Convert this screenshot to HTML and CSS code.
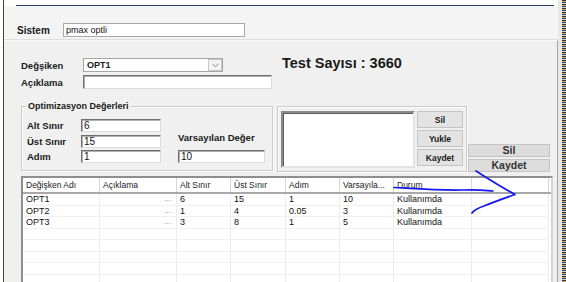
FILE: index.html
```html
<!DOCTYPE html>
<html lang="tr">
<head>
    <meta charset="UTF-8">
    <title>Optimizasyon</title>
    <link rel="stylesheet" href="styles.css">
</head>
<body>

<div class="screen">
    <div class="edge-left"></div>

    <div class="app">
        <div class="titlebar"><div class="titlebar-rule"></div></div>

        <div class="sistem-bar">
            <span class="lbl sistem-lbl">Sistem</span>
            <input class="field flat sistem-field" type="text" value="pmax optli">
        </div>

        <div class="main">
            <div class="top-row">
                <div class="form-col">
                    <div class="form-row">
                        <span class="lbl">Değşiken</span>
                        <div class="combo">
                            <span>OPT1</span>
                            <span class="combo-btn">
                                <svg width="7" height="5" viewBox="0 0 7 5"><polyline points="0.5,0.8 3.5,3.8 6.5,0.8" fill="none" stroke="#8a8a8a" stroke-width="1"/></svg>
                            </span>
                        </div>
                    </div>
                    <div class="form-row">
                        <span class="lbl">Açıklama</span>
                        <input class="field aciklama-field" type="text" value="">
                    </div>
                </div>
                <div class="test-count">Test Sayısı : 3660</div>
            </div>

            <div class="mid-row">
                <div class="group opt-group">
                    <span class="legend">Optimizasyon Değerleri</span>
                    <div class="opt-body">
                        <div class="opt-fields">
                            <div class="opt-row">
                                <span class="lbl">Alt Sınır</span>
                                <input class="field small-field" type="text" value="6">
                            </div>
                            <div class="opt-row">
                                <span class="lbl">Üst Sınır</span>
                                <input class="field small-field" type="text" value="15">
                            </div>
                            <div class="opt-row">
                                <span class="lbl">Adım</span>
                                <input class="field small-field" type="text" value="1">
                            </div>
                        </div>
                        <div class="default-col">
                            <span class="lbl">Varsayılan Değer</span>
                            <input class="field default-field" type="text" value="10">
                        </div>
                    </div>
                </div>

                <div class="group list-group">
                    <div class="listbox"></div>
                    <div class="btn-col">
                        <button class="btn">Sil</button>
                        <button class="btn">Yukle</button>
                        <button class="btn">Kaydet</button>
                    </div>
                </div>

                <div class="outer-btns">
                    <button class="btn-wide">Sil</button>
                    <button class="btn-wide">Kaydet</button>
                </div>
            </div>

            <div class="grid">
                <div class="grid-row grid-head">
                    <div class="cell">Değişken Adı</div>
                    <div class="cell">Açıklama</div>
                    <div class="cell">Alt Sınır</div>
                    <div class="cell">Üst Sınır</div>
                    <div class="cell">Adım</div>
                    <div class="cell">Varsayıla...</div>
                    <div class="cell">Durum</div>
                    <div class="cell"></div>
                </div>
                <div class="grid-row item">
                    <div class="cell">OPT1</div>
                    <div class="cell dots">...</div>
                    <div class="cell">6</div>
                    <div class="cell">15</div>
                    <div class="cell">1</div>
                    <div class="cell">10</div>
                    <div class="cell">Kullanımda</div>
                    <div class="cell"></div>
                </div>
                <div class="grid-row item">
                    <div class="cell">OPT2</div>
                    <div class="cell dots">...</div>
                    <div class="cell">1</div>
                    <div class="cell">4</div>
                    <div class="cell">0.05</div>
                    <div class="cell">3</div>
                    <div class="cell">Kullanımda</div>
                    <div class="cell"></div>
                </div>
                <div class="grid-row item">
                    <div class="cell">OPT3</div>
                    <div class="cell dots">...</div>
                    <div class="cell">3</div>
                    <div class="cell">8</div>
                    <div class="cell">1</div>
                    <div class="cell">5</div>
                    <div class="cell">Kullanımda</div>
                    <div class="cell"></div>
                </div>
                <div class="grid-row item"><div class="cell"></div><div class="cell"></div><div class="cell"></div><div class="cell"></div><div class="cell"></div><div class="cell"></div><div class="cell"></div><div class="cell"></div></div>
                <div class="grid-row item"><div class="cell"></div><div class="cell"></div><div class="cell"></div><div class="cell"></div><div class="cell"></div><div class="cell"></div><div class="cell"></div><div class="cell"></div></div>
                <div class="grid-row item"><div class="cell"></div><div class="cell"></div><div class="cell"></div><div class="cell"></div><div class="cell"></div><div class="cell"></div><div class="cell"></div><div class="cell"></div></div>
                <div class="grid-row item"><div class="cell"></div><div class="cell"></div><div class="cell"></div><div class="cell"></div><div class="cell"></div><div class="cell"></div><div class="cell"></div><div class="cell"></div></div>
                <div class="grid-row item"><div class="cell"></div><div class="cell"></div><div class="cell"></div><div class="cell"></div><div class="cell"></div><div class="cell"></div><div class="cell"></div><div class="cell"></div></div>
            </div>
        </div>
    </div>

    <div class="edge-right">
        <div class="edge-gap"></div>
        <div class="edge-strip"></div>
    </div>

    <!-- hand drawn pen marks over the grid -->
    <svg class="annotation" width="566" height="282" viewBox="0 0 566 282">
        <path d="M394 187.5 C 420 189, 440 190.5, 462 190 S 485 190.5, 493 191" fill="none" stroke="#1616f0" stroke-width="1.7" stroke-linecap="round"/>
        <path d="M476 171 C 490 180, 503 188, 515 194.5 C 505 198, 494 202, 484 206 C 478 208, 474 210, 472 213" fill="none" stroke="#1616f0" stroke-width="1.7" stroke-linecap="round" stroke-linejoin="round"/>
    </svg>
</div>

</body>
</html>
```

FILE: styles.css
```css
* {
    box-sizing: border-box;
}
body {
    margin: 0;
    font-family: "Liberation Sans", Arial, sans-serif;
    color: #1a1a1a;
    background: #fff;
}
.screen {
    position: relative;
    display: flex;
    width: 566px;
    height: 282px;
    overflow: hidden;
}
.edge-left {
    width: 3px;
    background: #fff;
}
.app {
    width: 555px;
    border-left: 1px solid #4d3d32;
    background: #f0f0f0;
    display: flex;
    flex-direction: column;
}
.titlebar {
    height: 6px;
    background: #fff;
    padding-top: 5px;
}
.titlebar-rule {
    height: 1px;
    margin: 0 4px 0 12px;
    background: #24426a;
}
.lbl {
    font-weight: bold;
    font-size: 9.5px;
    line-height: 11px;
    white-space: nowrap;
}
.field {
    height: 14px;
    padding: 0 2px;
    font-family: "Liberation Sans", Arial, sans-serif;
    font-size: 10px;
    color: #111;
    background: #fff;
    border: 1px solid;
    border-color: #6f6f6f #dcdcdc #dcdcdc #6f6f6f;
    box-shadow: inset 1px 1px 0 #b0b0b0;
    outline: none;
}
.field.flat {
    border-color: #a8a8a8;
    box-shadow: none;
    font-size: 9px;
}

/* sistem */
.sistem-bar {
    height: 36px;
    padding: 17px 0 0 13px;
    display: flex;
    align-items: flex-start;
    background: #f4f4f4;
    border-bottom: 1px solid #dedede;
}
.sistem-lbl {
    width: 46px;
    font-size: 10px;
    line-height: 16px;
}
.sistem-field {
    width: 182px;
}

/* main */
.main {
    flex: 1;
    border-top: 1px solid #fafafa;
    border-right: 1px solid #a3a3a3;
    display: flex;
    flex-direction: column;
}
.top-row {
    display: flex;
    align-items: flex-start;
}
.form-col {
    margin-left: 17px;
    padding-top: 17px;
}
.form-row {
    display: flex;
    align-items: center;
    height: 14px;
    margin-bottom: 3px;
}
.form-row:last-child {
    margin-bottom: 0;
}
.form-row .lbl {
    width: 62px;
}
.combo {
    width: 140px;
    height: 14px;
    padding-left: 3px;
    display: flex;
    align-items: center;
    justify-content: space-between;
    background: #fff;
    border: 1px solid #a5a5a5;
    font-weight: bold;
    font-size: 9px;
}
.combo-btn {
    width: 14px;
    height: 12px;
    display: flex;
    align-items: center;
    justify-content: center;
    background: #f4f4f4;
    border: 1px solid #c8c8c8;
}
.aciklama-field {
    width: 189px;
}
.test-count {
    margin: 14px 0 0 10px;
    font-size: 14.5px;
    font-weight: bold;
    line-height: 16px;
    color: #1a1a1a;
}

/* group boxes */
.mid-row {
    display: flex;
    align-items: flex-start;
    margin: 17px 0 0 17px;
}
.group {
    border: 1px solid #cbcbcb;
    box-shadow: inset 1px 1px 0 #fdfdfd, 1px 1px 0 #fdfdfd;
}
.opt-group {
    width: 252px;
    height: 65px;
    padding-left: 5px;
}
.legend {
    display: block;
    width: max-content;
    margin: -6px 0 0 -1px;
    padding: 0 2px;
    background: #f0f0f0;
    font-weight: bold;
    font-size: 9px;
    line-height: 11px;
}
.opt-body {
    display: flex;
    margin-top: 7px;
}
.opt-fields {
    display: flex;
    flex-direction: column;
    gap: 2.5px;
}
.opt-row {
    display: flex;
    align-items: center;
    height: 13px;
}
.opt-row .lbl {
    width: 54px;
}
.small-field {
    width: 80px;
    height: 13px;
}
.default-col {
    margin-left: 17px;
    display: flex;
    flex-direction: column;
    justify-content: flex-end;
}
.default-col .lbl {
    margin-bottom: 7px;
}
.default-field {
    width: 87px;
    height: 13px;
}
.list-group {
    width: 190px;
    height: 66px;
    margin-left: 4px;
    padding: 4px 2px 0 3px;
    display: flex;
    gap: 2px;
}
.listbox {
    width: 134px;
    height: 57px;
    background: #fff;
    border: 2px solid;
    border-color: #8a8a8a #e4e4e4 #e4e4e4 #8a8a8a;
    box-shadow: inset 1px 1px 0 #5c5c5c;
}
.btn-col {
    display: flex;
    flex-direction: column;
    gap: 2px;
}
.btn {
    width: 46px;
    height: 17px;
    padding: 0;
    background: #e3e3e3;
    border: 1px solid #c4c4c4;
    font-family: "Liberation Sans", Arial, sans-serif;
    font-weight: bold;
    font-size: 8.5px;
    color: #1a1a1a;
}
.outer-btns {
    margin: 38px 0 0 1px;
    display: flex;
    flex-direction: column;
    gap: 2px;
}
.btn-wide {
    width: 82px;
    height: 13px;
    padding: 0;
    background: #dcdcdc;
    border: 1px solid #c4c4c4;
    font-family: "Liberation Sans", Arial, sans-serif;
    font-weight: bold;
    font-size: 10.5px;
    line-height: 11px;
    color: #333;
}

/* grid */
.grid {
    flex: 1;
    width: 532px;
    margin: 4px 0 0 17px;
    background: #fff;
    border: 2px solid;
    border-color: #8e8e8e #d4d4d4 #d4d4d4 #8e8e8e;
    overflow: hidden;
}
.grid-row {
    display: grid;
    grid-template-columns: 77px 77px 54px 55px 54px 54px 78px 77px;
}
.grid-head {
    height: 16px;
    border-bottom: 2px solid #a8a8a8;
}
.grid-head .cell {
    height: 14px;
    padding-left: 3px;
    border-right: 1px solid #d6d6d6;
    font-size: 8.5px;
    line-height: 14px;
    color: #222;
    white-space: nowrap;
}
.item {
    height: 11.5px;
}
.item .cell {
    padding-left: 3px;
    border-right: 1px solid #ececec;
    border-bottom: 1px solid #f1f1f1;
    font-size: 9px;
    line-height: 10.5px;
    color: #111;
}
.item .dots {
    text-align: right;
    padding-right: 5px;
    font-size: 8px;
    color: #888;
}

/* right border of the captured window */
.edge-right {
    width: 8px;
    display: flex;
}
.edge-gap {
    width: 4px;
    background: #e8e8e8;
}
.edge-strip {
    width: 4px;
    background: repeating-linear-gradient(to bottom, #3b3530 0 1px, #c9a96a 1px 2px, #2c4a6e 2px 3px, #d8d0c0 3px 4px);
}
.annotation {
    position: absolute;
    top: 0;
    left: 0;
    pointer-events: none;
}
```
